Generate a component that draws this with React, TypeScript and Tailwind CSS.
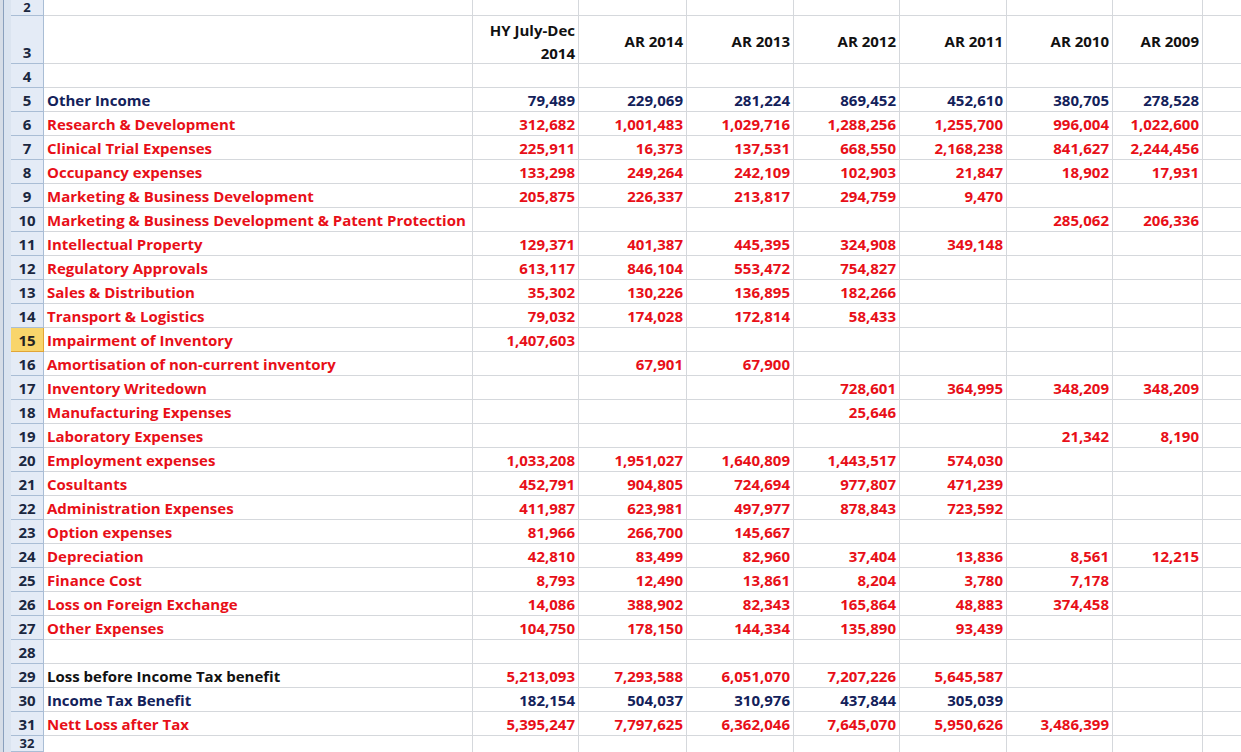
import React from "react";

type Row = {
  n: number;
  label?: string;
  tone?: "red" | "navy" | "black";
  numTone?: "red" | "navy";
  vals?: string[];
};

const rows: Row[] = [
  { n: 5, label: "Other Income", tone: "navy", vals: ["79,489", "229,069", "281,224", "869,452", "452,610", "380,705", "278,528"] },
  { n: 6, label: "Research & Development", vals: ["312,682", "1,001,483", "1,029,716", "1,288,256", "1,255,700", "996,004", "1,022,600"] },
  { n: 7, label: "Clinical Trial Expenses", vals: ["225,911", "16,373", "137,531", "668,550", "2,168,238", "841,627", "2,244,456"] },
  { n: 8, label: "Occupancy expenses", vals: ["133,298", "249,264", "242,109", "102,903", "21,847", "18,902", "17,931"] },
  { n: 9, label: "Marketing & Business Development", vals: ["205,875", "226,337", "213,817", "294,759", "9,470"] },
  { n: 10, label: "Marketing & Business Development & Patent Protection", vals: ["", "", "", "", "", "285,062", "206,336"] },
  { n: 11, label: "Intellectual Property", vals: ["129,371", "401,387", "445,395", "324,908", "349,148"] },
  { n: 12, label: "Regulatory Approvals", vals: ["613,117", "846,104", "553,472", "754,827"] },
  { n: 13, label: "Sales & Distribution", vals: ["35,302", "130,226", "136,895", "182,266"] },
  { n: 14, label: "Transport & Logistics", vals: ["79,032", "174,028", "172,814", "58,433"] },
  { n: 15, label: "Impairment of Inventory", vals: ["1,407,603"] },
  { n: 16, label: "Amortisation of non-current inventory", vals: ["", "67,901", "67,900"] },
  { n: 17, label: "Inventory Writedown", vals: ["", "", "", "728,601", "364,995", "348,209", "348,209"] },
  { n: 18, label: "Manufacturing Expenses", vals: ["", "", "", "25,646"] },
  { n: 19, label: "Laboratory Expenses", vals: ["", "", "", "", "", "21,342", "8,190"] },
  { n: 20, label: "Employment expenses", vals: ["1,033,208", "1,951,027", "1,640,809", "1,443,517", "574,030"] },
  { n: 21, label: "Cosultants", vals: ["452,791", "904,805", "724,694", "977,807", "471,239"] },
  { n: 22, label: "Administration Expenses", vals: ["411,987", "623,981", "497,977", "878,843", "723,592"] },
  { n: 23, label: "Option expenses", vals: ["81,966", "266,700", "145,667"] },
  { n: 24, label: "Depreciation", vals: ["42,810", "83,499", "82,960", "37,404", "13,836", "8,561", "12,215"] },
  { n: 25, label: "Finance Cost", vals: ["8,793", "12,490", "13,861", "8,204", "3,780", "7,178"] },
  { n: 26, label: "Loss on Foreign Exchange", vals: ["14,086", "388,902", "82,343", "165,864", "48,883", "374,458"] },
  { n: 27, label: "Other Expenses", vals: ["104,750", "178,150", "144,334", "135,890", "93,439"] },
  { n: 28 },
  { n: 29, label: "Loss before Income Tax benefit", tone: "black", numTone: "red", vals: ["5,213,093", "7,293,588", "6,051,070", "7,207,226", "5,645,587"] },
  { n: 30, label: "Income Tax Benefit", tone: "navy", vals: ["182,154", "504,037", "310,976", "437,844", "305,039"] },
  { n: 31, label: "Nett Loss after Tax", vals: ["5,395,247", "7,797,625", "6,362,046", "7,645,070", "5,950,626", "3,486,399"] },
];

const colW = ["w-[106px]", "w-[108px]", "w-[107px]", "w-[106px]", "w-[107px]", "w-[106px]", "w-[90px]"];
const headers = ["", "AR 2014", "AR 2013", "AR 2012", "AR 2011", "AR 2010", "AR 2009"];

function toneClass(t?: string) {
  if (t === "navy") return "text-[#13215a]";
  if (t === "black") return "text-[#111111]";
  return "text-[#e80f18]";
}

function RowHead({
  n,
  h,
  sel,
  align = "items-center pt-[2px]",
  size = "text-[15px]",
}: {
  n: number | string;
  h: string;
  sel?: boolean;
  align?: string;
  size?: string;
}) {
  return (
    <div className="flex shrink-0">
      <div className="w-[4px] bg-[#d6dde7] border-r border-[#8aa0bd]" />
      <div className="w-[7px] bg-[#dbe4f0]" />
      <div
        className={`${h} w-[33px] flex ${align} justify-center border-b border-r ${size} ${
          sel ? "bg-[#f8d56b] border-[#e1a537] text-[#222222]" : "bg-[#e4ebf6] border-[#a9bdd5] text-[#1a2740]"
        }`}
      >
        {n}
      </div>
    </div>
  );
}

function Cells({ h, children }: { h: string; children: React.ReactNode }) {
  return <div className={`flex ${h}`}>{children}</div>;
}

export default function App() {
  return (
    <div
      className="w-[1241px] h-[752px] overflow-hidden bg-white text-[15px] font-bold leading-none"
      style={{ fontFamily: "'Open Sans', Lato, sans-serif" }}
    >
      {/* row 2 */}
      <Cells h="h-[16px]">
        <RowHead n={2} h="h-[16px]" align="items-center" size="text-[13px]" />
        <div className="w-[429px] border-r border-b border-[#d5d8dc]" />
        {colW.map((w, i) => (
          <div key={i} className={`${w} border-r border-b border-[#d5d8dc]`} />
        ))}
        <div className="flex-1 border-b border-[#d5d8dc]" />
      </Cells>

      {/* row 3 headers */}
      <Cells h="h-[48px]">
        <RowHead n={3} h="h-[48px]" align="items-end pb-[3px]" />
        <div className="w-[429px] border-r border-b border-[#d5d8dc]" />
        <div className={`${colW[0]} border-r border-b border-[#d5d8dc] flex flex-col items-end justify-center pr-[3px] pt-[4px] gap-[8px] text-[#111111]`}>
          <span>HY July-Dec</span>
          <span>2014</span>
        </div>
        {headers.slice(1).map((t, i) => (
          <div
            key={t}
            className={`${colW[i + 1]} border-r border-b border-[#d5d8dc] flex items-center justify-end pr-[3px] pt-[4px] text-[#111111]`}
          >
            {t}
          </div>
        ))}
        <div className="flex-1 border-b border-[#d5d8dc]" />
      </Cells>

      {/* row 4 */}
      <Cells h="h-[24px]">
        <RowHead n={4} h="h-[24px]" />
        <div className="w-[429px] border-r border-b border-[#d5d8dc]" />
        {colW.map((w, i) => (
          <div key={i} className={`${w} border-r border-b border-[#d5d8dc]`} />
        ))}
        <div className="flex-1 border-b border-[#d5d8dc]" />
      </Cells>

      {rows.map((r) => (
        <Cells key={r.n} h="h-[24px]">
          <RowHead n={r.n} h="h-[24px]" sel={r.n === 15} />
          <div className={`w-[429px] border-r border-b border-[#d5d8dc] flex items-center pl-[3px] pt-[2px] whitespace-nowrap ${toneClass(r.tone)}`}>
            {r.label}
          </div>
          {colW.map((w, i) => (
            <div
              key={i}
              className={`${w} border-r border-b border-[#d5d8dc] flex items-center justify-end pr-[3px] pt-[2px] ${toneClass(r.numTone ?? r.tone)}`}
            >
              {r.vals?.[i] ?? ""}
            </div>
          ))}
          <div className="flex-1 border-b border-[#d5d8dc]" />
        </Cells>
      ))}

      {/* row 32 */}
      <Cells h="h-[16px]">
        <RowHead n={32} h="h-[16px]" align="items-center" size="text-[13px]" />
        <div className="w-[429px] border-r border-[#d5d8dc]" />
        {colW.map((w, i) => (
          <div key={i} className={`${w} border-r border-[#d5d8dc]`} />
        ))}
        <div className="flex-1" />
      </Cells>
    </div>
  );
}
